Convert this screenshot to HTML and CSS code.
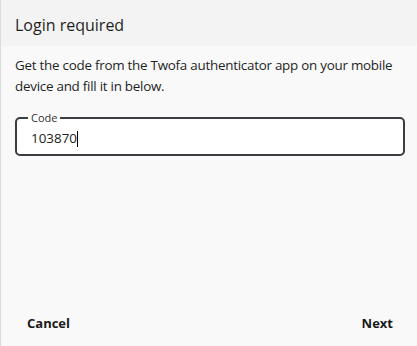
FILE: index.html
```html
<!DOCTYPE html>
<html>
<head>
<meta charset="utf-8">
<link rel="stylesheet" href="styles.css">
</head>
<body>
<div class="dialog">
  <div class="header">Login required</div>
  <div class="content">
    <p class="desc">Get the code from the Twofa authenticator app on your mobile device and fill it in below.</p>
    <fieldset class="field">
      <legend>Code</legend>
      <div class="value">103870<span class="caret"></span></div>
    </fieldset>
  </div>
  <div class="footer">
    <button class="btn">Cancel</button>
    <button class="btn">Next</button>
  </div>
</div>
</body>
</html>
```
FILE: styles.css
```css
html, body {
  margin: 0;
  padding: 0;
  height: 100%;
}
body {
  font-family: "Open Sans", "Noto Sans", sans-serif;
  color: #1f1f1f;
  background: #f9f9f9;
}
.dialog {
  height: 346px;
  display: flex;
  flex-direction: column;
  border-left: 1px solid #dcdcdc;
  box-sizing: border-box;
  background: #f9f9f9;
}
.header {
  height: 46px;
  box-sizing: border-box;
  background: #f3f3f3;
  font-size: 16px;
  padding: 14px 0 0 14px;
  color: #1f1f1f;
}
.content {
  flex: 1;
  padding: 9px 12px 0 14px;
}
.desc {
  margin: 0;
  font-size: 13.4px;
  letter-spacing: -0.25px;
  line-height: 21px;
  color: #1f1f1f;
}
.field {
  margin: 16px 0 0 0;
  padding: 0 0 0 14px;
  border: 2px solid #3a3d42;
  border-radius: 5px;
  height: 43px;
  box-sizing: border-box;
  background: #ffffff;
}
.field legend {
  font-size: 11px;
  padding: 0 3px;
  margin-left: -3px;
  color: #333;
  line-height: 10px;
}
.value {
  font-size: 13.4px;
  line-height: 18px;
  margin-top: 6px;
  color: #222;
}
.caret {
  display: inline-block;
  width: 1px;
  height: 16px;
  background: #000;
  vertical-align: -4px;
}
.footer {
  display: flex;
  justify-content: space-between;
  padding: 0 24px 14px 26px;
}
.btn {
  font-family: inherit;
  font-weight: 700;
  font-size: 13px;
  background: none;
  border: none;
  padding: 0;
  color: #1a1a1a;
}
```
